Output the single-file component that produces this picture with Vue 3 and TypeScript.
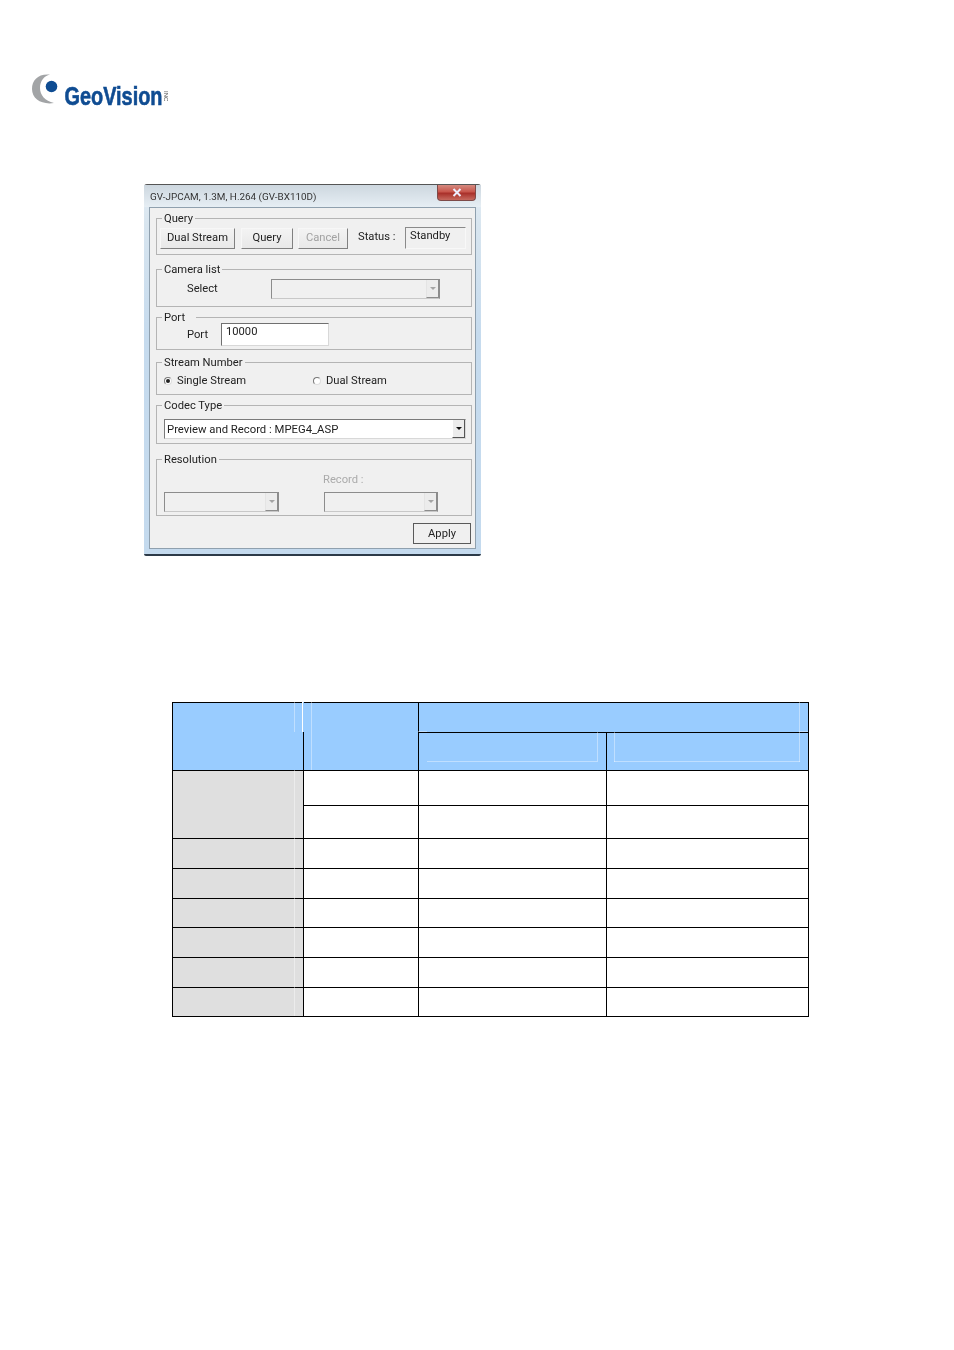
<script setup lang="ts">
interface Line { x: number; y: number; w: number; h: number; c: string }
const faint = 'rgba(255,255,255,.38)'
const lines: Line[] = [
  { x: 122, y: 0, w: 1, h: 30, c: faint },
  { x: 130, y: 0, w: 1, h: 30, c: '#ffffff' },
  { x: 131, y: 0, w: 1, h: 30, c: '#99ccff' },
  { x: 139, y: 0, w: 1, h: 68, c: faint },
  { x: 246, y: 29, w: 9, h: 1, c: faint },
  { x: 255, y: 59, w: 170, h: 1, c: faint },
  { x: 425, y: 30, w: 1, h: 30, c: faint },
  { x: 442, y: 30, w: 1, h: 30, c: faint },
  { x: 442, y: 59, w: 186, h: 1, c: faint },
  { x: 627, y: 0, w: 1, h: 60, c: faint },
  { x: 627, y: 29, w: 9, h: 1, c: faint },
  { x: 122, y: 68, w: 1, h: 246, c: 'rgba(255,255,255,.4)' }
]
const rowHeights = [35, 33, 30, 30, 29, 30, 30, 29]
</script>

<template>
  <div class="page">
    <svg class="logo" width="145" height="36" viewBox="0 0 145 36" role="img" aria-label="GeoVision">
      <path d="M19 .5 C7 -.5 1 6 1 15 C1 25 11 31 23 29 C14 27 9 21 9 14 C9 7 13 2 19 .5 Z" fill="#a2a4a6" />
      <circle cx="20.5" cy="12.5" r="5.8" fill="#0f4c92" />
      <text x="33.5" y="30.5" class="logo-text" textLength="98" lengthAdjust="spacingAndGlyphs">GeoVision</text>
      <text x="0" y="0" class="logo-inc" transform="translate(133 17) rotate(90)">INC</text>
    </svg>

    <div class="window">
      <div class="titlebar">
        <span class="title">GV-JPCAM, 1.3M, H.264 (GV-BX110D)</span>
        <span class="close">
          <svg width="10" height="9" viewBox="0 0 10 9"><path d="M1.5 1 L8.5 8 M8.5 1 L1.5 8" stroke="#eef" stroke-width="2" /></svg>
        </span>
      </div>
      <div class="panel">
        <section class="group g-query">
          <span class="legend">Query</span>
          <div class="row">
            <button class="btn b-dual">Dual Stream</button>
            <button class="btn b-query">Query</button>
            <button class="btn b-cancel" disabled>Cancel</button>
            <span class="status">Status :</span>
            <span class="standby">Standby</span>
          </div>
        </section>

        <section class="group g-camera">
          <span class="legend">Camera list</span>
          <div class="row">
            <span class="lbl-select">Select</span>
            <div class="combo off w-camera"><span class="arrow"><i></i></span></div>
          </div>
        </section>

        <section class="group g-port">
          <span class="legend legend-port">Port</span>
          <div class="row">
            <span class="lbl-port">Port</span>
            <div class="field">10000</div>
          </div>
        </section>

        <section class="group g-stream">
          <span class="legend">Stream Number</span>
          <div class="row">
            <label class="radio-item first"><span class="radio on"></span>Single Stream</label>
            <label class="radio-item"><span class="radio"></span>Dual Stream</label>
          </div>
        </section>

        <section class="group g-codec">
          <span class="legend">Codec Type</span>
          <div class="combo w-codec">
            <span class="combo-text">Preview and Record : MPEG4_ASP</span>
            <span class="arrow dark"><i></i></span>
          </div>
        </section>

        <section class="group g-res">
          <span class="legend">Resolution</span>
          <div class="res-cols">
            <div class="res-col one">
              <div class="combo off w-res1"><span class="arrow"><i></i></span></div>
            </div>
            <div class="res-col">
              <span class="record">Record :</span>
              <div class="combo off w-res2"><span class="arrow"><i></i></span></div>
            </div>
          </div>
        </section>

        <div class="actions"><button class="btn b-apply">Apply</button></div>
      </div>
    </div>

    <div class="table-wrap">
      <table class="grid">
        <colgroup><col class="c1" /><col class="c2" /><col class="c3" /><col class="c4" /></colgroup>
        <thead>
          <tr class="h1">
            <th rowspan="2"></th>
            <th rowspan="2"></th>
            <th colspan="2"></th>
          </tr>
          <tr class="h2"><th></th><th></th></tr>
        </thead>
        <tbody>
          <tr :style="{ height: rowHeights[0] + 'px' }">
            <td class="gray" rowspan="2"></td><td></td><td></td><td></td>
          </tr>
          <tr :style="{ height: rowHeights[1] + 'px' }"><td></td><td></td><td></td></tr>
          <tr v-for="(h, i) in rowHeights.slice(2)" :key="i" :style="{ height: h + 'px' }">
            <td class="gray"></td><td></td><td></td><td></td>
          </tr>
        </tbody>
      </table>
      <span
        v-for="(l, i) in lines"
        :key="'l' + i"
        class="mark"
        :style="{ left: l.x + 'px', top: l.y + 'px', width: l.w + 'px', height: l.h + 'px', background: l.c }"
      ></span>
    </div>
  </div>
</template>

<style scoped>
.page {
  width: 954px;
  height: 1350px;
  background: #fff;
  overflow: hidden;
  font-family: Roboto, "Liberation Sans", Arial, sans-serif;
  font-size: 11.2px;
  color: #222;
}
.logo {
  display: block;
  margin: 74px 0 0 31px;
  overflow: visible;
  filter: blur(0.45px);
}
.logo-text {
  font-family: "Liberation Sans", Arial, sans-serif;
  font-weight: 700;
  font-size: 25px;
  fill: #0f4c92;
  stroke: #0f4c92;
  stroke-width: 0.6px;
}
.logo-inc {
  font-family: "Liberation Sans", Arial, sans-serif;
  font-size: 6px;
  fill: #555;
}
.window {
  position: relative;
  box-sizing: border-box;
  width: 337px;
  height: 372px;
  margin: 74px 0 0 144px;
  padding: 0 5px 7px;
  background: linear-gradient(180deg, #e4edf4 0, #d8e5ef 40px, #c6dbee 150px, #c4daee 100%);
  border-top: 1px solid #555;
  border-bottom: 2px solid #2c3a48;
  border-radius: 3px 3px 2px 2px;
  filter: blur(0.35px);
}
.titlebar {
  height: 22px;
  display: flex;
  align-items: center;
  margin: 0 -5px;
  padding: 0 5px 0 6px;
  background: linear-gradient(180deg, #cdd7df, #e6eef4);
}
.title {
  font-size: 9.9px;
  color: #333;
  white-space: nowrap;
}
.close {
  position: absolute;
  right: 5px;
  top: 0;
  width: 39px;
  height: 16px;
  display: flex;
  align-items: center;
  justify-content: center;
  background: linear-gradient(180deg, #d58a80 0, #c8564c 45%, #a9302a 55%, #c66a5f 100%);
  border: 1px solid #7d4a48;
  border-top: 0;
  border-radius: 0 0 4px 4px;
  box-sizing: border-box;
}
.panel {
  box-sizing: border-box;
  height: 342px;
  padding: 10px 3px 5px 6px;
  background: #f0f0f0;
  border: 1px solid #8fa0ae;
}
.group {
  position: relative;
  box-sizing: border-box;
  width: 316px;
  border: 1px solid #b4b4b4;
}
.legend {
  position: absolute;
  left: 5px;
  top: -7px;
  line-height: 14px;
  padding: 0 2px;
  background: #f0f0f0;
  white-space: nowrap;
}
.legend-port { padding-right: 11px; }
.row {
  display: flex;
  align-items: center;
}
.g-query { height: 37px; padding: 8px 0 0 3px; }
.g-camera { height: 38px; margin-top: 14px; padding: 9px 0 0 30px; }
.g-port { height: 33px; margin-top: 10px; padding: 5px 0 0 30px; }
.g-stream { height: 33px; margin-top: 12px; padding: 11px 0 0 7px; }
.g-codec { height: 39px; margin-top: 10px; padding: 13px 0 0 7px; }
.g-res { height: 57px; margin-top: 15px; padding: 12px 0 0 7px; }

.btn {
  box-sizing: border-box;
  height: 21px;
  padding: 0 0 2px;
  font: inherit;
  color: #222;
  background: linear-gradient(180deg, #f3f3f3, #e8e8e8);
  border: 1px solid;
  border-color: #f7f7f7 #808080 #808080 #f7f7f7;
  border-radius: 0;
}
.b-dual { width: 75px; }
.b-query { width: 52px; margin-left: 6px; }
.b-cancel { width: 50px; margin-left: 5px; color: #a2a2a2; }
.status { width: 47px; margin-left: 10px; position: relative; top: -2px; }
.standby {
  box-sizing: border-box;
  width: 61px;
  height: 22px;
  line-height: 15px;
  padding-left: 4px;
  background: #f0f0f0;
  border: 1px solid;
  border-color: #8a8a8a #f8f8f8 #f8f8f8 #8a8a8a;
}
.lbl-select { width: 84px; position: relative; top: -1px; }
.lbl-port { width: 34px; }
.combo {
  position: relative;
  box-sizing: border-box;
  height: 20px;
  background: #fff;
  border: 1px solid;
  border-color: #7a7a7a #d8d8d8 #d8d8d8 #7a7a7a;
  display: flex;
  align-items: center;
}
.combo.off {
  background: #f0f0f0;
  border-color: #8c8c8c #8c8c8c #c8c8c8 #8c8c8c;
}
.w-camera { width: 169px; }
.w-codec { width: 302px; }
.w-res1 { width: 115px; }
.w-res2 { width: 114px; }
.combo-text { padding-left: 2px; font-size: 11.3px; }
.arrow {
  position: absolute;
  right: 0;
  top: 0;
  bottom: 0;
  width: 13px;
  background: #ececec;
  border-left: 1px solid #e4e4e4;
  border-right: 1px solid #8c8c8c;
  border-bottom: 1px solid #8c8c8c;
  box-sizing: border-box;
  display: flex;
  align-items: center;
  justify-content: center;
}
.arrow i {
  width: 0;
  height: 0;
  border-left: 3px solid transparent;
  border-right: 3px solid transparent;
  border-top: 3px solid #a4a4a4;
}
.arrow.dark { border-left: 1px solid #fff; border-right-color: #555; border-bottom-color: #555; }
.arrow.dark i { border-top-color: #111; }
.field {
  box-sizing: border-box;
  width: 108px;
  height: 23px;
  padding-left: 4px;
  line-height: 15px;
  background: #fff;
  border: 1px solid;
  border-color: #707070 #d8d8d8 #d8d8d8 #707070;
}
.radio-item {
  display: flex;
  align-items: center;
  gap: 5px;
  line-height: 14px;
}
.radio-item.first { width: 149px; }
.radio {
  box-sizing: border-box;
  width: 8px;
  height: 8px;
  border-radius: 50%;
  background: #fff;
  border: 1px solid;
  border-color: #777 #ddd #ddd #777;
  position: relative;
}
.radio.on::after {
  content: "";
  position: absolute;
  left: 1px;
  top: 1px;
  width: 4px;
  height: 4px;
  border-radius: 50%;
  background: #222;
}
.res-cols { display: flex; }
.res-col {
  display: flex;
  flex-direction: column;
  justify-content: flex-end;
  height: 40px;
}
.res-col.one { width: 160px; }
.record {
  line-height: 14px;
  margin: 0 0 5px -1px;
  color: #ababab;
}
.actions {
  display: flex;
  justify-content: flex-end;
  margin: 7px 1px 0 0;
}
.b-apply {
  width: 58px;
  padding-bottom: 1px;
  border-color: #5a5a5a;
  background: #f0f0f0;
}

.table-wrap {
  position: relative;
  width: 637px;
  margin: 146px 0 0 172px;
}
.grid {
  border-collapse: separate;
  border-spacing: 0;
  table-layout: fixed;
  width: 637px;
  border-top: 1px solid #000;
  border-left: 1px solid #000;
}
.c1 { width: 131px; }
.c2 { width: 115px; }
.c3 { width: 188px; }
.c4 { width: 202px; }
.grid th, .grid td {
  padding: 0;
  box-sizing: border-box;
  border-right: 1px solid #000;
  border-bottom: 1px solid #000;
}
.grid th { background: #99ccff; }
.h1 { height: 30px; }
.h2 { height: 38px; }
.gray { background: #dfdfdf; }
.mark {
  position: absolute;
  display: block;
}
</style>

<style>
html, body { margin: 0; background: #fff; }
</style>
